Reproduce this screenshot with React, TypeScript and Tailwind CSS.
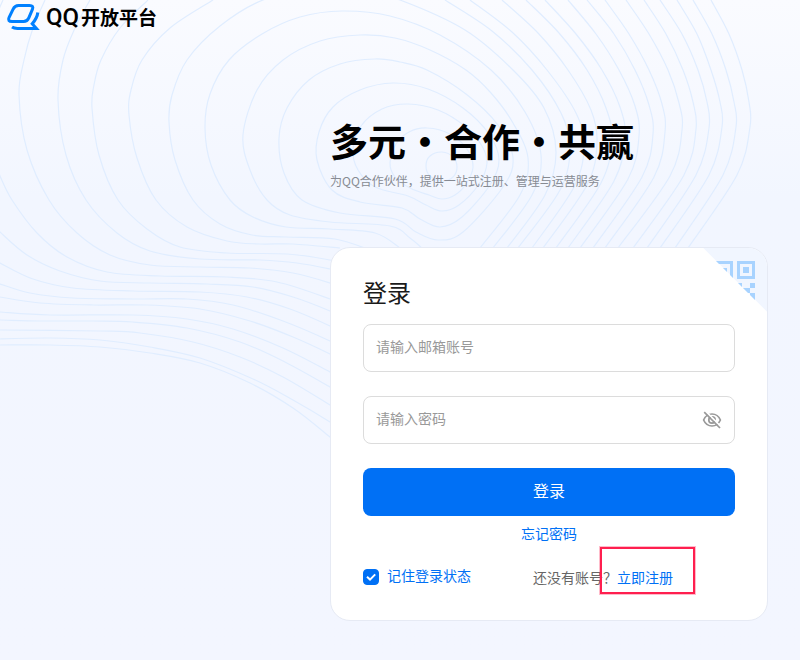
import { useState } from "react";

type Point = [number, number];

// Contour lines of the backdrop, innermost first.
const RINGS: Point[][] = [
  [[442, 152], [453, 157], [457, 167], [453, 177], [442, 181], [430, 176], [426, 166], [430, 156]],
  [[427, 128], [450, 134], [467, 149], [473, 167], [466, 184], [455, 195], [442, 199], [429, 195], [410, 188], [395, 177], [390, 163], [396, 144], [409, 132]],
  [[408, 104], [438, 110], [466, 127], [482, 146], [487, 163], [479, 184], [459, 205], [442, 211], [426, 205], [408, 196], [375, 187], [358, 170], [353, 150], [361, 126], [382, 109]],
  [[393, 83], [428, 89], [463, 108], [489, 134], [499, 160], [490, 185], [462, 217], [440, 227], [420, 219], [402, 208], [360, 202], [332, 190], [317, 160], [319, 132], [333, 107], [360, 90]],
  [[375, 59], [400, 62], [427, 70], [466, 94], [498, 125], [513, 158], [503, 187], [463, 232], [438, 240], [416, 232], [395, 219], [340, 213], [302, 200], [284, 173], [279, 138], [287, 108], [309, 80], [340, 64]],
];

const ARCS: Point[][] = [
  [[480, 248], [520, 195], [528, 158], [513, 123], [491, 93], [466, 70], [430, 50], [395, 38], [360, 35], [320, 41], [283, 60], [257, 90], [243, 135], [250, 170], [267, 200], [290, 215], [330, 222], [390, 226], [410, 238], [424, 250]],
  [[493, 248], [532, 195], [541, 155], [525, 112], [491, 70], [440, 35], [390, 16], [342, 11], [300, 17], [262, 34], [229, 60], [210, 94], [205, 128], [211, 165], [230, 200], [253, 217], [286, 227], [330, 229], [375, 233], [400, 248]],
  [[507, 248], [545, 195], [556, 152], [544, 108], [513, 70], [465, 30], [400, 0], [360, -10], [320, -13], [263, 0], [220, 26], [187, 60], [172, 95], [169, 122], [175, 160], [193, 200], [220, 224], [252, 235], [286, 237], [335, 239], [370, 250]],

  [[213, 0], [170, 28], [142, 60], [131, 90], [129, 115], [137, 158], [156, 200], [187, 227], [227, 241], [260, 244], [293, 244], [340, 248]],
  [[148, 0], [120, 28], [101, 60], [94, 85], [92, 108], [99, 155], [118, 200], [147, 229], [180, 247], [227, 253], [287, 254], [330, 260], [350, 265]],
  [[90, 0], [75, 28], [63, 60], [58, 100], [66, 155], [86, 200], [117, 233], [150, 251], [200, 259], [260, 260], [297, 263], [330, 269], [350, 274]],
  [[45, 0], [33, 28], [24, 60], [19, 95], [27, 150], [49, 200], [77, 233], [110, 255], [150, 265], [200, 267], [250, 268], [293, 273], [330, 283], [350, 291]],
  [[3, 0], [-8, 25]],
  [[-10, 152], [0, 176], [12, 200], [37, 233], [67, 257], [107, 272], [160, 276], [227, 277], [277, 282], [330, 299], [350, 308]],
  [[-10, 221], [0, 232], [27, 255], [60, 271], [100, 281], [150, 283], [207, 284], [253, 287], [293, 297], [330, 311], [350, 321]],
  [[-10, 257], [0, 263], [33, 279], [73, 288], [133, 291], [200, 292], [247, 297], [290, 309], [330, 326], [350, 337]],
  [[-10, 281], [0, 284], [30, 293], [73, 298], [133, 299], [187, 299], [233, 305], [283, 321], [330, 341], [350, 352]],
  [[-10, 295], [0, 297], [40, 303], [93, 305], [147, 305], [200, 309], [250, 321], [293, 337], [330, 354], [350, 365]],
  [[-10, 311], [0, 312], [50, 315], [133, 315], [187, 319], [233, 329], [283, 348], [330, 372], [350, 383]],
  [[-10, 320], [0, 320], [40, 321], [93, 321], [133, 322], [187, 328], [240, 342], [283, 361], [330, 387], [350, 399]],
  [[-10, 330], [0, 330], [100, 331], [140, 333], [193, 342], [240, 357], [283, 377], [330, 405], [350, 418]],
  [[-10, 340], [0, 339], [50, 338], [100, 340], [150, 347], [200, 358], [253, 379], [293, 400], [330, 422], [350, 436]],
  [[-10, 345], [0, 345], [50, 345], [100, 347], [150, 353], [200, 363], [250, 383], [293, 408], [330, 437], [350, 454]],

  [[445, 0], [492, 31], [532, 70], [561, 113], [570, 148], [560, 190], [518, 248]],
  [[470, 0], [512, 32], [547, 70], [576, 113], [584, 146], [574, 187], [532, 248]],
  [[502, 0], [538, 33], [568, 70], [591, 110], [597, 143], [587, 185], [543, 248]],
  [[526, 0], [559, 33], [587, 70], [606, 108], [612, 140], [601, 183], [556, 248]],
  [[545, 0], [576, 34], [602, 70], [620, 107], [625, 138], [614, 181], [568, 248]],
  [[568, 0], [596, 34], [619, 70], [635, 106], [639, 136], [628, 179], [580, 248]],
  [[587, 0], [614, 34], [635, 70], [649, 105], [653, 134], [642, 177], [593, 248]],
  [[605, 0], [629, 34], [649, 70], [662, 104], [665, 132], [654, 177], [605, 248]],
  [[626, 0], [649, 34], [668, 70], [679, 103], [682, 130], [670, 176], [618, 248]],
  [[644, 0], [666, 34], [683, 70], [693, 102], [696, 129], [684, 175], [633, 248]],
  [[660, 0], [682, 34], [698, 70], [707, 102], [709, 128], [696, 175], [647, 248]],
  [[677, 0], [697, 34], [711, 70], [720, 102], [722, 127], [709, 175], [660, 248]],
  [[693, 0], [712, 34], [726, 70], [734, 102], [736, 127], [723, 175], [675, 248]],
  [[711, 0], [729, 34], [742, 70], [749, 102], [750, 127], [737, 175], [688, 248]],
];

// Catmull-Rom spline through the points, as cubic beziers
function curve(points: Point[], closed: boolean) {
  const n = points.length;
  const at = (i: number) => (closed ? points[(i + n) % n] : points[Math.max(0, Math.min(n - 1, i))]);
  let d = `M${points[0][0]} ${points[0][1]}`;
  for (let i = 0; i < (closed ? n : n - 1); i++) {
    const [a, b, c, e] = [at(i - 1), at(i), at(i + 1), at(i + 2)];
    d += `C${b[0] + (c[0] - a[0]) / 6} ${b[1] + (c[1] - a[1]) / 6} ${c[0] - (e[0] - b[0]) / 6} ${c[1] - (e[1] - b[1]) / 6} ${c[0]} ${c[1]}`;
  }
  return closed ? `${d}Z` : d;
}

function Backdrop() {
  return (
    <svg
      className="pointer-events-none absolute top-0 left-0"
      width="800"
      height="660"
      fill="none"
      stroke="#e0edff"
      strokeWidth="1.2"
      aria-hidden="true"
    >
      {RINGS.map((r, i) => (
        <path key={`r-${i}`} d={curve(r, true)} />
      ))}
      {ARCS.map((a, i) => (
        <path key={`a-${i}`} d={curve(a, false)} />
      ))}
    </svg>
  );
}

function Logo() {
  return (
    <svg width="34" height="28" viewBox="6 3 34 28" fill="none" stroke="#0080ff" strokeWidth="3" aria-hidden="true">
      <path d="M18.5 5.5H29.5Q34 5.5 32.4 9.4L28.8 17.8Q27.2 21.4 23.7 21.4H12Q7.3 21.4 9 17.6L13 9.3Q14.8 5.5 18.5 5.5Z" />
      <path d="M37.8 12.5C37.4 16.5 35.2 20.3 32.2 23.8L36.4 28.4H17.5Q14 28.4 12 27" />
    </svg>
  );
}

function QrCorner() {
  return (
    <svg className="block" width="64" height="64" aria-hidden="true">
      <clipPath id="fold">
        <path d="M0 0H64V64Z" />
      </clipPath>
      <g clipPath="url(#fold)">
        <path d="M0 0H64V64Z" fill="#f1f6ff" />
        <g fill="none" stroke="#a8d3ff" strokeWidth="3">
          <rect x="13.5" y="14.5" width="15" height="15" />
          <rect x="35.5" y="14.5" width="15" height="15" />
        </g>
        <g fill="#a8d3ff">
          <rect x="19" y="20" width="5" height="5" />
          <rect x="40" y="19" width="6" height="6" />
          <rect x="34" y="35" width="5" height="5" />
          <rect x="39" y="40" width="5" height="5" />
          <rect x="47" y="35" width="5" height="5" />
          <rect x="44" y="40" width="3" height="5" />
          <rect x="47" y="45" width="5" height="11" />
        </g>
      </g>
    </svg>
  );
}

function EyeOffIcon() {
  return (
    <svg width="20" height="20" viewBox="0 0 20 20" fill="none" stroke="#999" strokeWidth="1.7" aria-hidden="true">
      <path d="M1.6 10C3.2 6.3 6.3 4 10 4S16.8 6.3 18.4 10C16.8 13.7 13.7 16 10 16S3.2 13.7 1.6 10Z" />
      <circle cx="10" cy="10" r="3.2" />
      <path d="M3.6 1.2L19.2 16.8" stroke="#fff" />
      <path d="M2.2 2.2L18 18" />
    </svg>
  );
}

export default function App() {
  const [showPassword, setShowPassword] = useState(false);
  const [remember, setRemember] = useState(true);

  return (
    <div className="relative min-h-screen overflow-hidden bg-linear-to-b from-[#fafbff] via-[#f2f6ff] via-30% to-[#f3f6ff] font-['Noto_Sans_CJK_SC',sans-serif] text-sm">
      <Backdrop />

      <header className="relative flex h-[34px] items-center gap-[6px] pl-[6px] text-black">
        <Logo />
        <div className="flex items-center gap-[2px]">
          <span className="font-['Roboto',sans-serif] text-2xl font-medium">QQ</span>
          <span className="text-[19px] font-bold">开放平台</span>
        </div>
      </header>

      <main className="relative pt-[78px] pr-8 pl-[330px]">
        <h1 className="text-[38px] leading-[56px] font-bold whitespace-nowrap text-black">多元・合作・共赢</h1>
        <p className="mt-1 text-xs leading-[18px] text-[#878b93]">为QQ合作伙伴，提供一站式注册、管理与运营服务</p>

        <form
          className="relative mt-[57px] max-w-[438px] rounded-[20px] border border-[#e6eaf4] bg-white px-8 pt-7 pb-[33px]"
          onSubmit={(e) => e.preventDefault()}
        >
          <div className="absolute top-0 right-0 overflow-hidden rounded-tr-[19px]">
            <QrCorner />
          </div>

          <h2 className="text-2xl leading-8 text-[#1a1a1a]">登录</h2>

          <input
            type="email"
            aria-label="邮箱账号"
            placeholder="请输入邮箱账号"
            className="mt-4 block h-12 w-full rounded-lg border border-[#dcdcdc] bg-white px-3 pb-1 placeholder:text-[#999]"
          />

          <div className="relative mt-6">
            <input
              type={showPassword ? "text" : "password"}
              aria-label="密码"
              placeholder="请输入密码"
              className="block h-12 w-full rounded-lg border border-[#dcdcdc] bg-white pr-12 pb-1 pl-3 placeholder:text-[#999]"
            />
            <button
              type="button"
              aria-label="显示密码"
              className="absolute top-[14px] right-[13px]"
              onClick={() => setShowPassword(!showPassword)}
            >
              <EyeOffIcon />
            </button>
          </div>

          <button type="submit" className="mt-6 block h-12 w-full rounded-lg bg-[#0070f5] pb-1 text-base text-white">
            登录
          </button>

          <div className="mt-2 text-center leading-[18px]">
            <a href="#forgot" className="text-[#0070f5]">
              忘记密码
            </a>
          </div>

          <div className="mt-[25px] flex items-start gap-[62px] leading-5 whitespace-nowrap">
            <label className="flex items-center gap-2 text-[#0070f5]">
              <span className="relative size-4">
                <input
                  type="checkbox"
                  checked={remember}
                  onChange={(e) => setRemember(e.target.checked)}
                  className="block size-4 appearance-none rounded border border-[#dcdcdc] checked:border-[#0070f5] checked:bg-[#0070f5]"
                />
                <svg
                  className="pointer-events-none absolute inset-0"
                  width="16"
                  height="16"
                  fill="none"
                  stroke="#fff"
                  strokeWidth="2"
                  aria-hidden="true"
                >
                  <path d="M4 7.8L7 10.6L12.2 5.4" />
                </svg>
              </span>
              <span className="h-5 leading-4">记住登录状态</span>
            </label>
            <div className="text-[#666]">
              还没有账号？
              <span className="relative inline-block">
                <a href="#register" className="text-[#0070f5]">
                  立即注册
                </a>
                <span className="pointer-events-none absolute -top-5 -left-[17px] h-[47px] w-[95px] border-2 border-[#ff1f4f] ring-1 ring-[#ff1f4f]/30" />
              </span>
            </div>
          </div>
        </form>
      </main>
    </div>
  );
}
